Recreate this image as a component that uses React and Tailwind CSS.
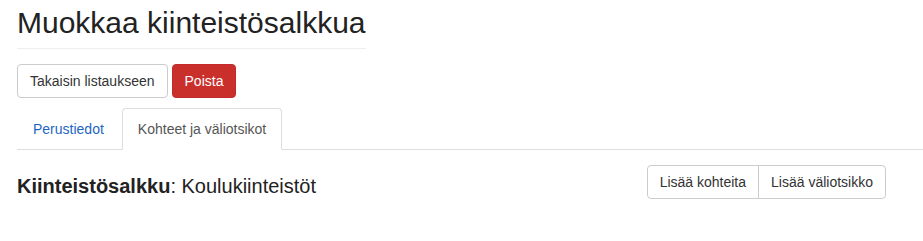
export default function App() {
  return (
    <div className="w-[923px] h-[241px] bg-white text-[#333] text-[14px] leading-[20px] overflow-hidden" style={{ fontFamily: '"Liberation Sans", Arial, sans-serif' }}>
      <div className="pl-[17px]">
        <div className="w-fit border-b border-[#eee] pt-[6px] pb-[9px]">
          <h1 className="text-[30px] leading-[33px] font-normal text-[#222]">Muokkaa kiinteistösalkkua</h1>
        </div>
        <div className="flex gap-[4px] mt-[15px]">
          <button className="px-[12px] py-[6px] border border-[#ccc] rounded-[4px] bg-white text-[#333] leading-[20px]">Takaisin listaukseen</button>
          <button className="px-[12px] py-[6px] border border-[#c12b2b] rounded-[4px] bg-[#c9302c] text-white leading-[20px]">Poista</button>
        </div>
        <div className="flex mt-[10px] border-b border-[#ddd]">
          <a className="block mr-[2px] px-[15px] py-[10px] border border-transparent rounded-t-[4px] text-[#1e66c4] -mb-px">Perustiedot</a>
          <a className="block mr-[2px] px-[15px] py-[10px] border border-[#ddd] border-b-transparent rounded-t-[4px] bg-white text-[#555] -mb-px">Kohteet ja väliotsikot</a>
        </div>
        <div className="flex justify-between items-start pr-[37px]">
          <h2 className="mt-[25px] text-[20px] leading-[22px] font-normal text-[#222]">
            <span className="font-bold">Kiinteistösalkku</span>: Koulukiinteistöt
          </h2>
          <div className="flex mt-[15px]">
            <button className="px-[12px] py-[6px] border border-[#ccc] rounded-l-[4px] bg-white text-[#333] leading-[20px]">Lisää kohteita</button>
            <button className="-ml-px px-[12px] py-[6px] border border-[#ccc] rounded-r-[4px] bg-white text-[#333] leading-[20px]">Lisää väliotsikko</button>
          </div>
        </div>
      </div>
    </div>
  );
}
